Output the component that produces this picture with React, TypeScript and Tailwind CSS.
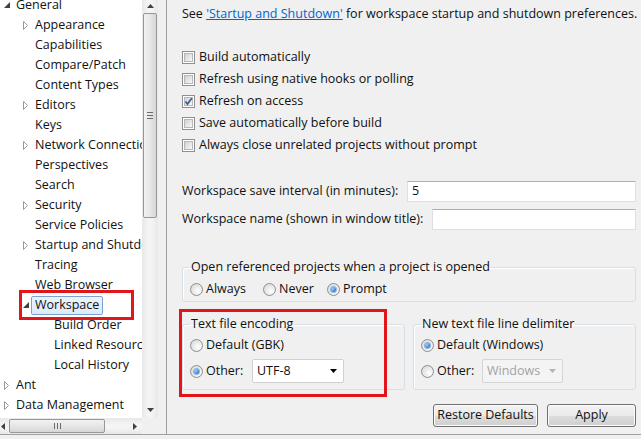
import React from "react";

type TreeNode = {
  label: string;
  level: 0 | 1 | 2;
  state?: "open" | "closed";
  selected?: boolean;
};

const TREE: TreeNode[] = [
  { label: "General", level: 0, state: "open" },
  { label: "Appearance", level: 1, state: "closed" },
  { label: "Capabilities", level: 1 },
  { label: "Compare/Patch", level: 1 },
  { label: "Content Types", level: 1 },
  { label: "Editors", level: 1, state: "closed" },
  { label: "Keys", level: 1 },
  { label: "Network Connections", level: 1, state: "closed" },
  { label: "Perspectives", level: 1 },
  { label: "Search", level: 1 },
  { label: "Security", level: 1, state: "closed" },
  { label: "Service Policies", level: 1 },
  { label: "Startup and Shutdown", level: 1, state: "closed" },
  { label: "Tracing", level: 1 },
  { label: "Web Browser", level: 1 },
  { label: "Workspace", level: 1, state: "open", selected: true },
  { label: "Build Order", level: 2 },
  { label: "Linked Resources", level: 2 },
  { label: "Local History", level: 2 },
  { label: "Ant", level: 0, state: "closed" },
  { label: "Data Management", level: 0, state: "closed" },
];

const INDENT = ["pl-[3px]", "pl-[22px]", "pl-[41px]"];

const CHECKS = [
  { label: "Build automatically", checked: false },
  { label: "Refresh using native hooks or polling", checked: false },
  { label: "Refresh on access", checked: true },
  { label: "Save automatically before build", checked: false },
  { label: "Always close unrelated projects without prompt", checked: false },
];

function Expander({ state }: { state?: "open" | "closed" }) {
  if (state === "open")
    return (
      <svg width="6" height="6" className="ml-[1px]">
        <path d="M6 0 L6 6 L0 6 Z" fill="#404040" />
      </svg>
    );
  if (state === "closed")
    return (
      <svg width="6" height="9" className="ml-[1px]">
        <path d="M0.5 0.5 L4.5 4.5 L0.5 8.5 Z" fill="none" stroke="#9a9a9a" />
      </svg>
    );
  return null;
}

function TreeRow({ node }: { node: TreeNode }) {
  return (
    <div className={`flex h-5 shrink-0 items-center whitespace-nowrap ${INDENT[node.level]}`}>
      <span className="flex w-[13px] shrink-0 items-center">
        <Expander state={node.state} />
      </span>
      {node.selected ? (
        <span className="-ml-[4px] flex h-[19px] items-center rounded-[2px] border border-[#7da2ce] bg-[linear-gradient(#ebf4fd,#dbeafc)] px-[3px]">
          {node.label}
        </span>
      ) : (
        <span>{node.label}</span>
      )}
    </div>
  );
}

function ArrowGlyph({ dir }: { dir: "up" | "down" | "left" | "right" }) {
  const d = {
    up: "M0 4 L3.5 0 L7 4 Z",
    down: "M0 0 L7 0 L3.5 4 Z",
    left: "M4 0 L4 7 L0 3.5 Z",
    right: "M0 0 L4 3.5 L0 7 Z",
  }[dir];
  const vertical = dir === "up" || dir === "down";
  return (
    <svg width={vertical ? 7 : 4} height={vertical ? 4 : 7}>
      <path d={d} fill="#404040" />
    </svg>
  );
}

function VScrollbar() {
  return (
    <div className="flex w-[16px] shrink-0 flex-col bg-[linear-gradient(90deg,#e8e8e8,#f4f4f4_40%,#f4f4f4_60%,#e8e8e8)]">
      <div className="flex h-[12px] items-center justify-center">
        <ArrowGlyph dir="up" />
      </div>
      <div className="mx-[1px] mt-[1px] flex h-[205px] items-center justify-center rounded-[2px] border border-[#979797] bg-[linear-gradient(90deg,#f2f2f2,#e6e6e6_50%,#d6d6d6)]">
        <div className="flex flex-col gap-[2px]">
          <span className="h-px w-[6px] bg-[#6b6b6b]" />
          <span className="h-px w-[6px] bg-[#6b6b6b]" />
          <span className="h-px w-[6px] bg-[#6b6b6b]" />
        </div>
      </div>
      <div className="flex-1" />
      <div className="flex h-[17px] items-center justify-center">
        <ArrowGlyph dir="down" />
      </div>
    </div>
  );
}

function HScrollbar() {
  return (
    <div className="flex h-[16px] items-center bg-[linear-gradient(#e8e8e8,#f4f4f4_40%,#f4f4f4_60%,#e8e8e8)]">
      <div className="flex w-[9px] items-center justify-start pl-[1px]">
        <ArrowGlyph dir="left" />
      </div>
      <div className="flex h-[14px] w-[96px] items-center justify-center gap-[2px] rounded-[2px] border border-[#979797] bg-[linear-gradient(#f2f2f2,#e6e6e6_50%,#d6d6d6)]">
        <span className="h-[6px] w-px bg-[#6b6b6b]" />
        <span className="h-[6px] w-px bg-[#6b6b6b]" />
        <span className="h-[6px] w-px bg-[#6b6b6b]" />
      </div>
      <div className="flex-1" />
      <div className="flex w-[14px] items-center justify-center">
        <ArrowGlyph dir="right" />
      </div>
    </div>
  );
}

function CheckBox({ checked }: { checked?: boolean }) {
  return (
    <span className="flex h-[13px] w-[13px] shrink-0 items-center justify-center border border-[#8e8f8f] bg-white">
      <span className="relative flex h-[9px] w-[9px] items-center justify-center border border-[#b4b8bd] bg-[linear-gradient(135deg,#cfd3d8,#f7f7f7)]">
        {checked && (
          <svg width="9" height="9" viewBox="0 0 9 9" className="absolute -left-px -top-px">
            <path d="M1.5 4.5 L3.5 7 L7.8 1.2" fill="none" stroke="#3f5a8c" strokeWidth="1.7" />
          </svg>
        )}
      </span>
    </span>
  );
}

function Radio({ checked }: { checked?: boolean }) {
  return (
    <span className="flex h-[13px] w-[13px] shrink-0 items-center justify-center rounded-full border border-[#8e8f8f] bg-[radial-gradient(circle_at_65%_65%,#ffffff,#d2d2d2)]">
      {checked && (
        <span className="h-[5px] w-[5px] rounded-full bg-[radial-gradient(circle_at_35%_35%,#9fd4ff,#1450a8)] ring-1 ring-[#8bb6e2]" />
      )}
    </span>
  );
}

function RadioItem({ label, checked, width }: { label: string; checked?: boolean; width?: string }) {
  return (
    <span className={`flex items-center gap-[3px] ${width ?? ""}`}>
      <Radio checked={checked} />
      <span>{label}</span>
    </span>
  );
}

function Combo({ value, width, disabled }: { value: string; width: string; disabled?: boolean }) {
  return (
    <div
      className={`flex h-[24px] items-center justify-between rounded-[2px] border pl-[4px] pr-[6px] ${width} ${
        disabled ? "border-[#d5d5d5] bg-[#f4f4f4] text-[#a3a3a3]" : "border-[#d0d0d0] bg-white"
      }`}
    >
      <span>{value}</span>
      <svg width="7" height="4">
        <path d="M0 0 L7 0 L3.5 4 Z" fill={disabled ? "#b4b4b4" : "#000"} />
      </svg>
    </div>
  );
}

function TextField({ value, width }: { value?: string; width: string }) {
  return (
    <div className={`flex h-[21px] items-center border border-[#dbdfe6] border-t-[#abadb3] bg-white px-[4px] ${width}`}>
      {value}
    </div>
  );
}

function Group({ title, className, children }: { title: string; className?: string; children: React.ReactNode }) {
  return (
    <fieldset className={`min-w-0 rounded-[3px] border border-[#d5dfe5] pl-[7px] shadow-[inset_1px_1px_0_#ffffff] ${className ?? ""}`}>
      <legend className="h-[16px] px-[1px] leading-[16px]">{title}</legend>
      {children}
    </fieldset>
  );
}

function Button({ label, width }: { label: string; width: string }) {
  return (
    <button className={`h-[23px] rounded-[3px] border border-[#707070] bg-[linear-gradient(#f2f2f2_0%,#ebebeb_50%,#dddddd_51%,#cfcfcf_100%)] shadow-[inset_0_0_0_1px_#fbfbfb] ${width}`}>
      {label}
    </button>
  );
}

export default function App() {
  return (
    <div className="relative flex h-[439px] w-[641px] flex-col overflow-hidden bg-[#f0f0f0] font-['Open_Sans','Noto_Sans',sans-serif] text-[12.5px] text-[#111]">
      <div className="flex h-[434px] shrink-0">
        {/* Preference tree */}
        <div className="flex w-[158px] shrink-0 flex-col bg-white">
          <div className="flex min-h-0 flex-1">
            <div className="flex w-[142px] flex-col overflow-hidden">
              <div className="-mt-[5px] flex flex-col">
                {TREE.map((node) => (
                  <TreeRow key={node.label} node={node} />
                ))}
              </div>
            </div>
            <VScrollbar />
          </div>
          <div className="flex">
            <div className="w-[142px]">
              <HScrollbar />
            </div>
            <div className="h-[16px] flex-1 bg-[#f0f0f0]" />
          </div>
        </div>
        <div className="w-[8px] shrink-0" />

        {/* Workspace page */}
        <div className="flex min-w-0 flex-1 flex-col border-l border-[#a0a0a0] pl-[15px] pr-[5px]">
          <p className="mt-[5px] h-[18px] whitespace-nowrap leading-[18px]">
            See <span className="text-[#0066cc] underline">'Startup and Shutdown'</span> for workspace startup and shutdown preferences.
          </p>

          <div className="mt-[23px] flex flex-col">
            {CHECKS.map((c) => (
              <div key={c.label} className="flex h-[22px] items-center gap-[4px]">
                <CheckBox checked={c.checked} />
                <span>{c.label}</span>
              </div>
            ))}
          </div>

          <div className="mt-[25px] flex h-[21px] items-center">
            <span className="flex-1 whitespace-nowrap">Workspace save interval (in minutes):</span>
            <TextField value="5" width="w-[229px]" />
          </div>
          <div className="mt-[7px] flex h-[21px] items-center">
            <span className="flex-1 whitespace-nowrap">Workspace name (shown in window title):</span>
            <TextField width="w-[204px]" />
          </div>

          <Group title="Open referenced projects when a project is opened" className="mt-[29px] pb-[4px]">
            <div className="mt-[6px] flex h-[16px] items-center">
              <RadioItem label="Always" width="w-[73px]" />
              <RadioItem label="Never" width="w-[64px]" />
              <RadioItem label="Prompt" checked />
            </div>
          </Group>

          <div className="mt-[14px] flex gap-[8px]">
            <Group title="Text file encoding" className="flex-1 pb-[6px]">
              <div className="mt-[5px] flex h-[16px] items-center">
                <RadioItem label="Default (GBK)" />
              </div>
              <div className="mt-[6px] flex h-[24px] items-center">
                <Radio checked />
                <span className="ml-[3px] w-[46px]">Other:</span>
                <Combo value="UTF-8" width="w-[92px]" />
              </div>
            </Group>
            <Group title="New text file line delimiter" className="flex-1 pb-[6px]">
              <div className="mt-[5px] flex h-[16px] items-center">
                <RadioItem label="Default (Windows)" checked />
              </div>
              <div className="mt-[6px] flex h-[24px] items-center">
                <Radio />
                <span className="ml-[3px] w-[45px]">Other:</span>
                <Combo value="Windows" width="w-[81px]" disabled />
              </div>
            </Group>
          </div>

          <div className="mt-[14px] flex justify-end gap-[9px]">
            <Button label="Restore Defaults" width="w-[105px]" />
            <Button label="Apply" width="w-[89px]" />
          </div>
        </div>
      </div>
      <div className="flex-1 border-t border-[#a0a0a0] bg-[#f0f0f0]" />

      {/* annotation boxes */}
      <div className="pointer-events-none absolute left-[19px] top-[290px] h-[30px] w-[115px] border-[3px] border-[#e2151b]" />
      <div className="pointer-events-none absolute left-[179px] top-[309px] h-[88px] w-[208px] border-[3px] border-[#e2151b]" />
    </div>
  );
}
